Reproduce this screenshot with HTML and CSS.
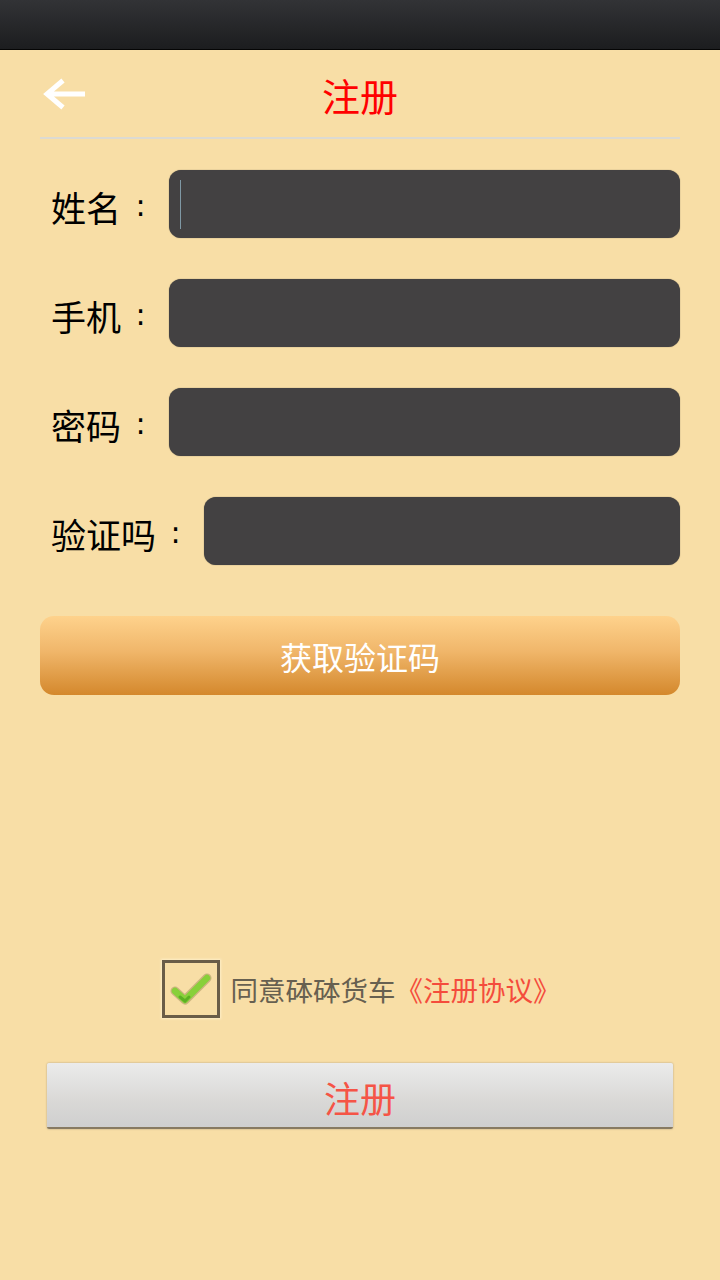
FILE: index.html
```html
<!DOCTYPE html>
<html lang="zh-CN">
<head>
<meta charset="utf-8">
<title>注册</title>
<link rel="stylesheet" href="styles.css">
</head>
<body>
<div class="statusbar"></div>
<div class="page">
  <header class="header">
    <div class="back">
      <svg width="44" height="32" viewBox="0 0 44 32"><path d="M43 16H5M21 2.5L5 16L21 29.5" fill="none" stroke="#fff" stroke-width="5"/></svg>
    </div>
    <h1 class="title">注册</h1>
    <div></div>
  </header>
  <div class="divider"></div>
  <form class="form">
    <div class="row"><label class="label">姓名<span class="colon">:</span></label><div class="field"><span class="caret"></span></div></div>
    <div class="row"><label class="label">手机<span class="colon">:</span></label><div class="field"></div></div>
    <div class="row"><label class="label">密码<span class="colon">:</span></label><div class="field"></div></div>
    <div class="row"><label class="label">验证吗<span class="colon">:</span></label><div class="field"></div></div>
  </form>
  <div class="code-btn">获取验证码</div>
  <div class="agree">
    <span class="checkbox">
      <svg width="44" height="38" viewBox="0 0 44 38"><path d="M6 20L16 29L38 7" fill="none" stroke="#a08a5a" stroke-width="9" stroke-linejoin="round" stroke-linecap="round" opacity="0.5"/><path d="M6 20L16 29L38 7" fill="none" stroke="#88d03a" stroke-width="6.5" stroke-linejoin="round" stroke-linecap="round"/><path d="M11 26L16 30L20 26" fill="none" stroke="#5cb023" stroke-width="3" stroke-linecap="round"/></svg>
    </span>
    <span class="agree-text">同意砵砵货车<span class="link">《注册协议》</span></span>
  </div>
  <div class="reg-btn">注册</div>
</div>
</body>
</html>
```
FILE: styles.css
```css
html, body {
  margin: 0;
  padding: 0;
}
body {
  width: 720px;
  height: 1280px;
  background: #f8dea6;
  font-family: "Noto Sans CJK SC", "Noto Sans", sans-serif;
  overflow: hidden;
}
.statusbar {
  height: 49px;
  background: linear-gradient(#323336, #1c1d1f);
  border-bottom: 1px solid #050505;
}
.page {
  padding: 0 40px;
}
.header {
  height: 87px;
  display: grid;
  grid-template-columns: 1fr auto 1fr;
  align-items: center;
}
.back {
  padding-left: 2px;
  height: 32px;
}
.back svg { display: block; }
.title {
  margin: 0;
  font-size: 38px;
  font-weight: normal;
  color: #ff0000;
  line-height: 1;
  padding-top: 2px;
}
.divider {
  height: 2px;
  background: #dcdad2;
}
.form {
  margin: 31px 0 0;
  display: flex;
  flex-direction: column;
  gap: 41px;
}
.row {
  display: flex;
  align-items: center;
  gap: 13px;
}
.label {
  padding-left: 11px;
  font-size: 35px;
  line-height: 1;
  color: #000;
  white-space: nowrap;
  padding-top: 4px;
  display: flex;
  align-items: center;
}
.colon {
  display: inline-block;
  width: 35px;
  text-align: center;
  font-family: "DejaVu Sans", sans-serif;
  font-size: 30px;
  padding-left: 4px;
  box-sizing: border-box;
}
.field {
  flex: 1;
  height: 68px;
  background: #434142;
  border-radius: 12px;
  box-shadow: 0 0 1px #6a6250;
  position: relative;
}
.caret {
  position: absolute;
  left: 11px;
  top: 10px;
  width: 1px;
  height: 49px;
  background: #7f98a4;
}
.code-btn {
  margin-top: 51px;
  height: 79px;
  border-radius: 14px;
  background: linear-gradient(#fed28c, #f0b66a 45%, #d4882c);
  color: #fff;
  font-size: 32px;
  display: flex;
  align-items: center;
  justify-content: center;
}
.agree {
  margin-top: 265px;
  display: flex;
  align-items: center;
  justify-content: center;
  gap: 11px;
  padding-left: 2px;
}
.checkbox {
  width: 52px;
  height: 52px;
  border: 3px solid #6a5d48;
  box-shadow: 0 0 2px 1px #fdeec8;
  display: flex;
  align-items: center;
  justify-content: center;
}
.checkbox svg { display: block; margin-top: 2px; }
.agree-text {
  font-size: 27.5px;
  color: #676050;
}
.link {
  color: #f44c3c;
}
.reg-btn {
  margin: 45px 7px 0;
  height: 66px;
  border-radius: 2px;
  background: linear-gradient(#ebebeb, #d9d8d6 60%, #cfcfcf);
  border-bottom: 2px solid #877a62;
  box-shadow: 0 0 2px #a8987a;
  color: #f55446;
  font-size: 36px;
  display: flex;
  align-items: center;
  justify-content: center;
  padding-top: 4px;
  box-sizing: border-box;
}
```
